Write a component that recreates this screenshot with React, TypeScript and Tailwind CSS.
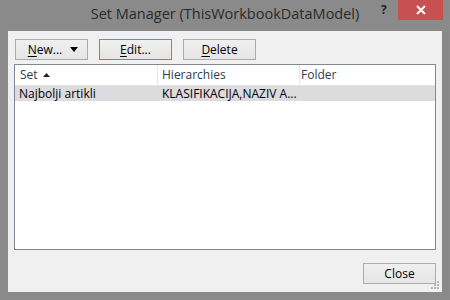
const font = { fontFamily: '"Segoe UI", "Open Sans", "Noto Sans", sans-serif' };

const Btn = ({ children, focused = false, className = '' }: { children: React.ReactNode; focused?: boolean; className?: string }) => (
  <button
    className={
      'h-[21px] w-[73px] flex items-center justify-center text-[12px] text-black bg-gradient-to-b from-[#f0f0f0] to-[#e5e5e5] border ' +
      (focused ? 'border-[#3399ff]' : 'border-[#acacac]') +
      ' ' +
      className
    }
  >
    {children}
  </button>
);

export default function App() {
  return (
    <div className="w-[450px] h-[300px] bg-[#8a8a8a] flex flex-col select-none" style={font}>
      {/* Title bar */}
      <div className="relative h-[31px] shrink-0">
        <div className="absolute left-0 right-0 top-[4px] text-center text-[14.5px] leading-[20px] text-[#2a2a2a]">
          Set Manager (ThisWorkbookDataModel)
        </div>
        <div className="absolute left-[381px] top-[2px] text-[12px] leading-[16px] font-bold text-[#222222]">?</div>
        <div className="absolute left-[398px] top-0 w-[45px] h-[20px] bg-[#c75050] flex items-center justify-center">
          <svg width="10" height="10" viewBox="0 0 10 10">
            <path d="M1 1L9 9M9 1L1 9" stroke="white" strokeWidth="2" />
          </svg>
        </div>
      </div>

      {/* Client area */}
      <div className="relative mx-[8px] mb-[8px] flex-1 bg-[#f0f0f0] flex flex-col">
        {/* Toolbar */}
        <div className="flex gap-[11px] pl-[7px] pt-[8px]">
          <Btn>
            <span className="flex items-center gap-[8px] pl-[3px]">
              <span>
                <span className="underline underline-offset-2">N</span>ew...
              </span>
              <svg width="8" height="5" viewBox="0 0 8 5">
                <path d="M0 0H8L4 5Z" fill="black" />
              </svg>
            </span>
          </Btn>
          <Btn focused>
            <span>
              <span className="underline underline-offset-2">E</span>dit...
            </span>
          </Btn>
          <Btn>
            <span>
              <span className="underline underline-offset-2">D</span>elete
            </span>
          </Btn>
        </div>

        {/* List */}
        <div className="mt-[4px] ml-[6px] w-[422px] h-[186px] border border-[#828790] bg-white flex flex-col">
          <div className="flex h-[21px] text-[12px] text-[#2e3b4e] border-b border-[#e5e5e5]">
            <div className="w-[143px] flex items-center pl-[5px] gap-[5px] border-r border-[#e5e5e5]">
              <span>Set</span>
              <svg width="7" height="4" viewBox="0 0 7 4">
                <path d="M0 4H7L3.5 0Z" fill="#222" />
              </svg>
            </div>
            <div className="w-[142px] flex items-center pl-[4px] border-r border-[#e5e5e5]">Hierarchies</div>
            <div className="flex-1 flex items-center pl-[1px]">Folder</div>
          </div>
          <div className="flex h-[15px] bg-[#dcdcdf] text-[12px] text-black items-center leading-none">
            <div className="w-[143px] pl-[4px]">Najbolji artikli</div>
            <div className="w-[142px] pl-[4px]">KLASIFIKACIJA,NAZIV A...</div>
            <div className="flex-1" />
          </div>
        </div>

        {/* Footer */}
        <div className="flex justify-end pr-[6px] mt-[13px]">
          <Btn>Close</Btn>
        </div>

        {/* Resize grip */}
        <svg className="absolute right-[2px] bottom-[2px]" width="10" height="10" viewBox="0 0 10 10">
          <rect x="7" y="1" width="2" height="2" fill="#b8b8b8" />
          <rect x="4" y="4" width="2" height="2" fill="#b8b8b8" />
          <rect x="7" y="4" width="2" height="2" fill="#b8b8b8" />
          <rect x="1" y="7" width="2" height="2" fill="#b8b8b8" />
          <rect x="4" y="7" width="2" height="2" fill="#b8b8b8" />
          <rect x="7" y="7" width="2" height="2" fill="#b8b8b8" />
        </svg>
      </div>
    </div>
  );
}
